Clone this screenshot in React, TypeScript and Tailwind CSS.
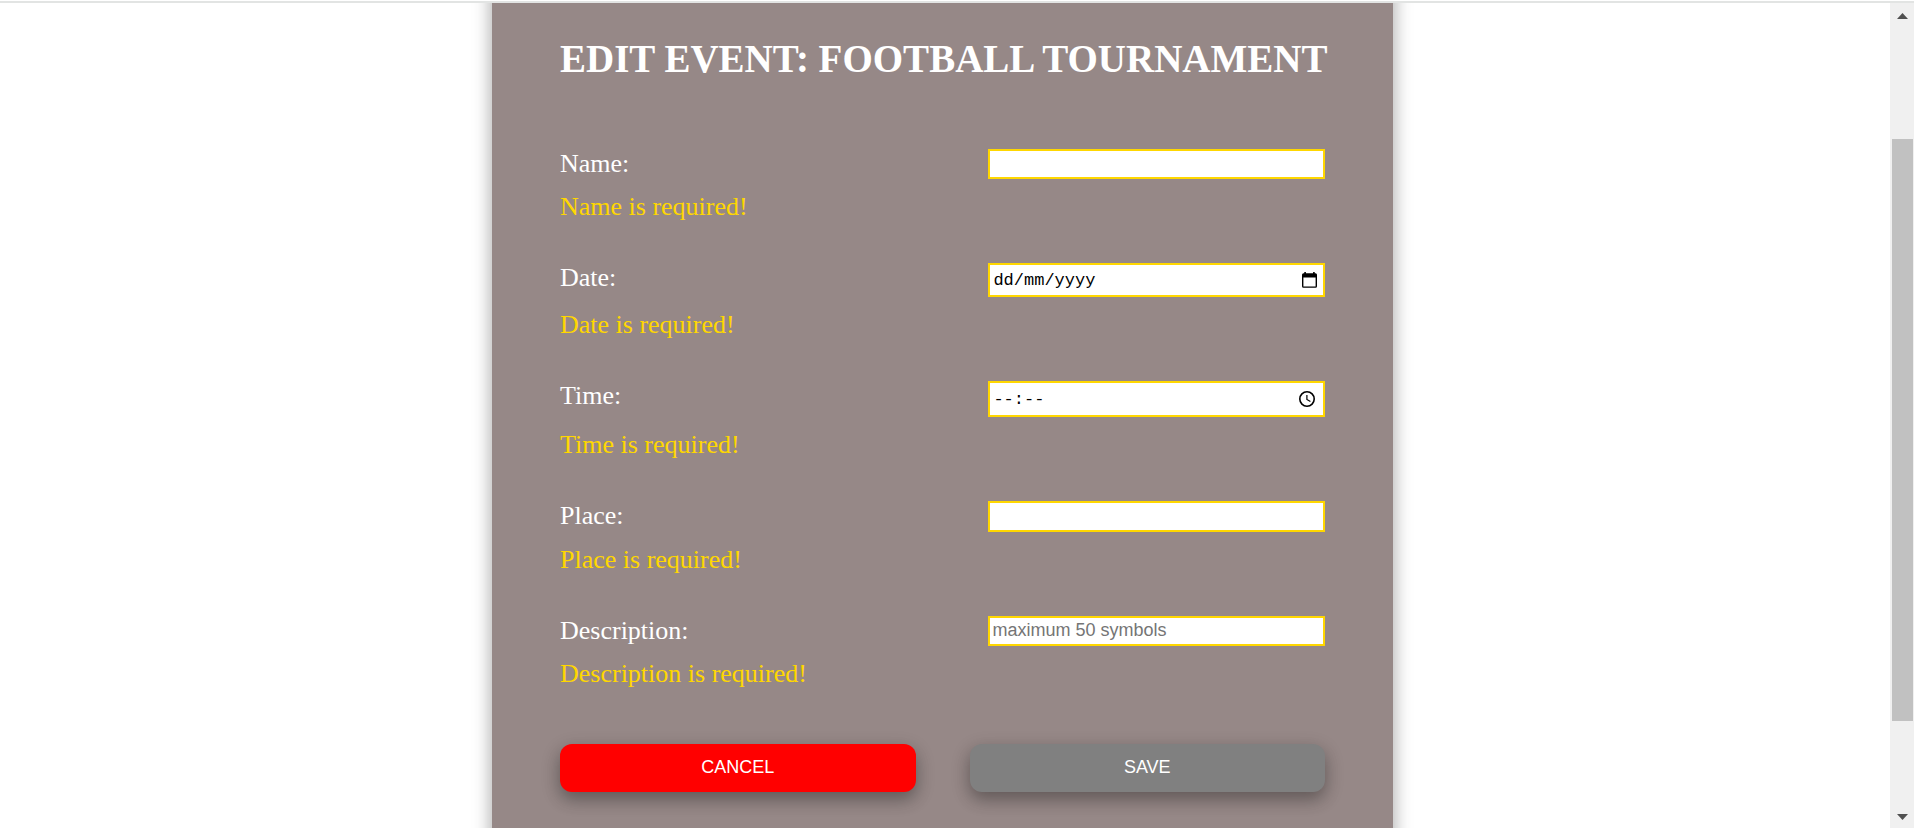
import type { ReactNode } from "react";

type FieldProps = {
  id: string;
  label: string;
  error: string;
  children: ReactNode;
};

const inputBox = "w-[44%] shrink-0 border-2 border-[#ffd700] bg-white";
const raised = "shadow-[0_8px_16px_0_rgba(0,0,0,0.2),0_6px_20px_0_rgba(0,0,0,0.19)]";

function Field({ id, label, error, children }: FieldProps) {
  return (
    <div className="flex flex-col gap-[13px]">
      <div className="flex items-start justify-between">
        <label htmlFor={id} className="h-[30px] text-[26px] leading-[30px]">
          {label}
        </label>
        {children}
      </div>
      <p className="text-[26px] leading-[30px] text-[#ffd700]">{error}</p>
    </div>
  );
}

function CalendarIcon() {
  return (
    <svg viewBox="0 0 15 16" className="h-4 w-[15px]" aria-hidden="true">
      <path
        fill="#000"
        fillRule="evenodd"
        d="M2.300 0h1.600v1.300h7.200V0h1.600v1.300h.8A1.500 1.500 0 0 1 15 2.800v11.500a1.500 1.500 0 0 1-1.500 1.500h-12A1.500 1.500 0 0 1 0 14.300V2.800a1.500 1.500 0 0 1 1.500-1.500h.8zM1.400 5.600v8.800h12.200V5.600z"
      />
    </svg>
  );
}

function ClockIcon() {
  return (
    <svg viewBox="0 0 16 16" className="size-4" fill="none" stroke="#000" aria-hidden="true">
      <circle cx="8" cy="8" r="7.200" strokeWidth="1.600" />
      <path d="M7.900 4v4.400l3.500 2.100" strokeWidth="1.200" />
    </svg>
  );
}

export default function App() {
  return (
    <div className="flex h-screen flex-col overflow-hidden bg-white font-['Liberation_Serif',serif]">
      <div className="mt-px h-0.5 shrink-0 bg-[#e2e4e3]" />
      <div className="flex min-h-0 flex-1">
        <main className="flex min-w-0 flex-1 justify-center overflow-hidden pr-[5px]">
          <form
            className={`-my-10 w-full max-w-[901px] bg-[#968887] px-[68px] pt-[73px] text-white ${raised}`}
            onSubmit={(event) => event.preventDefault()}
          >
            <h1 className="mb-[67px] text-[39px] leading-[46px] font-bold whitespace-nowrap uppercase">
              Edit event: Football Tournament
            </h1>

            <div className="flex flex-col gap-[41px]">
              <Field id="name" label="Name:" error="Name is required!">
                <input
                  id="name"
                  type="text"
                  className={`${inputBox} h-[30px] px-0.5 font-['Liberation_Sans',sans-serif] text-[18px] text-black`}
                />
              </Field>

              <Field id="date" label="Date:" error="Date is required!">
                <div className={`${inputBox} flex h-[34px] items-center pr-1.5 pl-[3px]`}>
                  <input
                    id="date"
                    type="text"
                    placeholder="dd/mm/yyyy"
                    className="min-w-0 flex-1 pt-0.5 font-['Liberation_Mono',monospace] text-[17px] text-black placeholder:text-black"
                  />
                  <button type="button" aria-label="Choose date">
                    <CalendarIcon />
                  </button>
                </div>
              </Field>

              <Field id="time" label="Time:" error="Time is required!">
                <div className={`${inputBox} flex h-9 items-center pr-2 pl-[3px]`}>
                  <input
                    id="time"
                    type="text"
                    placeholder="--:--"
                    className="min-w-0 flex-1 pt-0.5 font-['Liberation_Mono',monospace] text-[17px] text-black placeholder:text-black"
                  />
                  <button type="button" aria-label="Choose time">
                    <ClockIcon />
                  </button>
                </div>
              </Field>

              <Field id="place" label="Place:" error="Place is required!">
                <input
                  id="place"
                  type="text"
                  className={`${inputBox} h-[31px] px-0.5 font-['Liberation_Sans',sans-serif] text-[18px] text-black`}
                />
              </Field>

              <Field id="description" label="Description:" error="Description is required!">
                <input
                  id="description"
                  type="text"
                  maxLength={50}
                  placeholder="maximum 50 symbols"
                  className={`${inputBox} h-[30px] px-0.5 pb-0.5 font-['Liberation_Sans',sans-serif] text-[18px] text-black placeholder:text-[#757575]`}
                />
              </Field>
            </div>

            <div className="mt-[55px] grid grid-cols-2 gap-[54px] font-['Liberation_Sans',sans-serif] text-[18px] leading-[22px]">
              <button type="button" className={`h-12 rounded-xl bg-[#ff0000] pb-0.5 ${raised}`}>
                CANCEL
              </button>
              <button type="submit" className={`h-12 rounded-xl bg-[#808080] pb-0.5 ${raised}`}>
                SAVE
              </button>
            </div>
          </form>
        </main>

        <div className="flex w-6 shrink-0 flex-col items-center bg-[#f0f0f0] pt-2.5 pb-2" aria-hidden="true">
          <svg viewBox="0 0 11 6" className="h-1.5 w-[11px] shrink-0" fill="#505050">
            <path d="M5.500 0 11 6H0z" />
          </svg>
          <div className="flex w-full flex-1 flex-col pt-[120px] pr-px pb-[93px] pl-0.5">
            <div className="flex-1 bg-[#c1c1c1]" />
          </div>
          <svg viewBox="0 0 11 6" className="h-1.5 w-[11px] shrink-0" fill="#505050">
            <path d="M0 0h11L5.500 6z" />
          </svg>
        </div>
      </div>
    </div>
  );
}
